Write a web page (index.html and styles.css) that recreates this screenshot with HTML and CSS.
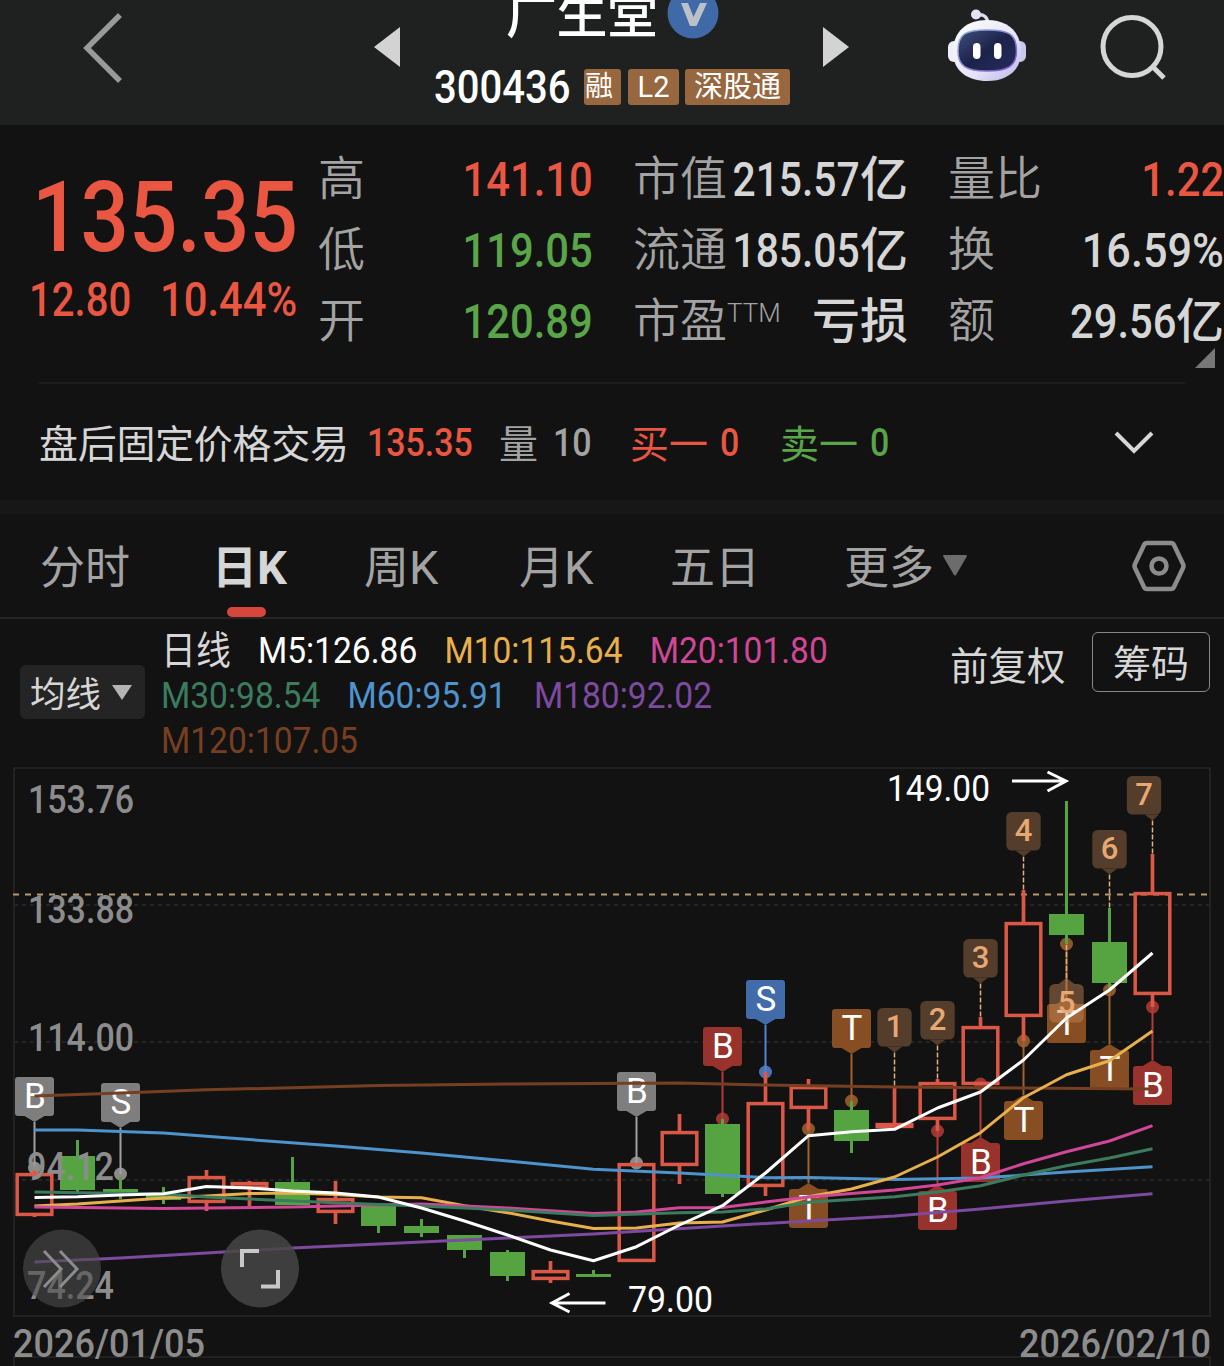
FILE: index.html
```
<!DOCTYPE html>
<html lang="zh-CN">
<head>
    <meta charset="UTF-8">
    <meta name="viewport" content="width=device-width, initial-scale=1.0">
    <title>广生堂 300436</title>
    <link rel="stylesheet" href="styles.css">
</head>
<body>
    <header class="header">
        <svg class="back" width="46" height="76" viewBox="0 0 46 76"><path d="M41 5 L8 38 L41 71" /></svg>
        <svg class="prev" width="26" height="40" viewBox="0 0 26 40"><path d="M0 20 L26 0 V40 Z" /></svg>
        <div class="stock">
            <div class="stock-name">
                <span>广生堂</span>
                <svg width="52" height="52" viewBox="0 0 52 52"><circle cx="26" cy="26" r="25.5" fill="#4069a8" /><path d="M14 16 H21 L26.500 30 L33 16 H40 L29.500 39 H23 Z" fill="#bcc0c8" /></svg>
            </div>
            <div class="stock-code">
                <span class="code"><b class="num">300436</b></span>
                <span class="tag tag-rong">融</span>
                <span class="tag tag-l2">L2</span>
                <span class="tag tag-sgt">深股通</span>
            </div>
        </div>
        <svg class="next" width="26" height="40" viewBox="0 0 26 40"><path d="M26 20 L0 0 V40 Z" /></svg>
        <svg class="robot" width="80" height="76" viewBox="0 0 80 76">
            <defs>
                <linearGradient id="shell" x1="0" y1="0" x2="1" y2="1">
                    <stop offset="0" stop-color="#ffffff" />
                    <stop offset="0.6" stop-color="#e6e3f8" />
                    <stop offset="1" stop-color="#b6b4ea" />
                </linearGradient>
                <linearGradient id="visor" x1="0" y1="0" x2="1" y2="1">
                    <stop offset="0" stop-color="#414d7d" />
                    <stop offset="0.5" stop-color="#1b2349" />
                    <stop offset="1" stop-color="#272b5c" />
                </linearGradient>
                <linearGradient id="rim" x1="0" y1="0" x2="1" y2="1">
                    <stop offset="0" stop-color="#8fb4dc" />
                    <stop offset="1" stop-color="#7d55c8" />
                </linearGradient>
            </defs>
            <path d="M30 9 Q40 7 41 18" fill="none" stroke="#dcdaf4" stroke-width="3.500" />
            <circle cx="29" cy="8.500" r="5" fill="#e4e2f7" />
            <rect x="1" y="35" width="12" height="21" rx="6" fill="#eeeefa" />
            <rect x="67" y="35" width="12" height="21" rx="6" fill="#c9c9ee" />
            <path d="M40 14 C60 14 74 25 74 46 C74 66 58 75 40 75 C22 75 6 66 6 46 C6 25 20 14 40 14 Z" fill="url(#shell)" />
            <path d="M40 24 C62 24 69.500 28 69.500 45 C69.500 60 61 65 40 65 C19 65 11 60 11 45 C11 28 18 24 40 24 Z" fill="url(#visor)" stroke="url(#rim)" stroke-width="1.500" />
            <rect x="26" y="37" width="7.5" height="16" rx="3.7" fill="#fff" />
            <rect x="47" y="37" width="7.5" height="16" rx="3.7" fill="#fff" />
        </svg>
        <svg class="search" width="70" height="70" viewBox="0 0 70 70"><ellipse cx="33" cy="32.500" rx="29" ry="29" /><path d="M53 52 L65 64" /></svg>
    </header>

    <section class="quote">
        <div class="price">
            <div class="price-last up"><span class="num">135.35</span></div>
            <div class="price-change up">
                <span class="num chg">12.80</span>
                <span class="num pct">10.44%</span>
            </div>
        </div>
        <div class="stats stats-a">
            <span class="label">高</span><span class="value up num">141.10</span>
            <span class="label">低</span><span class="value down num">119.05</span>
            <span class="label">开</span><span class="value down num">120.89</span>
        </div>
        <div class="stats stats-b">
            <span class="label">市值</span><span class="value"><span class="num">215.57</span>亿</span>
            <span class="label">流通</span><span class="value"><span class="num">185.05</span>亿</span>
            <span class="label">市盈<sup>TTM</sup></span><span class="value">亏损</span>
        </div>
        <div class="stats stats-c">
            <span class="label">量比</span><span class="value up num">1.22</span>
            <span class="label">换</span><span class="value num turnover">16.59%</span>
            <span class="label">额</span><span class="value"><span class="num">29.56</span>亿</span>
        </div>
        <div class="corner"></div>
    </section>

    <section class="after-hours">
        <span class="ah-title">盘后固定价格交易</span>
        <span class="num up">135.35</span>
        <span class="cn muted">量</span>
        <span class="num muted">10</span>
        <span class="cn up">买一</span>
        <span class="num up">0</span>
        <span class="cn down">卖一</span>
        <span class="num down">0</span>
        <svg width="40" height="26" viewBox="0 0 40 26"><path d="M2 3 L20 21 L38 3" /></svg>
    </section>

    <nav class="tabs">
        <span class="tab">分时</span>
        <span class="tab active">日<i>K</i></span>
        <span class="tab">周<i>K</i></span>
        <span class="tab">月<i>K</i></span>
        <span class="tab">五日</span>
        <span class="tab">更多</span>
        <svg class="more" width="24" height="21" viewBox="0 0 24 21"><path d="M1 0 H23 Q24.500 0 23.500 2 L13 20 Q12 21 11 20 L0.500 2 Q-0.500 0 1 0 Z" /></svg>
        <svg class="setting" width="54" height="52" viewBox="0 0 54 52"><path d="M15 3 H39 Q41 3 42 5 L51 24 Q52 26 51 28 L42 47 Q41 49 39 49 H15 Q13 49 12 47 L3 28 Q2 26 3 24 L12 5 Q13 3 15 3 Z" /><circle cx="27" cy="26" r="7.500" /></svg>
    </nav>

    <section class="ma">
        <div class="ma-btn"><span>均线</span><svg width="20" height="15" viewBox="0 0 20 15"><path d="M0 0 H20 L10 15 Z" fill="#b4b4b4" /></svg></div>
        <div class="ma-list">
            <div class="ma-row"><span class="ma-name">日线</span><span class="m5">M5:126.86</span><span class="m10">M10:115.64</span><span class="m20">M20:101.80</span></div>
            <div class="ma-row"><span class="m30">M30:98.54</span><span class="m60">M60:95.91</span><span class="m180">M180:92.02</span></div>
            <div class="ma-row"><span class="m120">M120:107.05</span></div>
        </div>
        <span class="fuquan">前复权</span>
        <span class="chouma">筹码</span>
    </section>

    <svg id="chart" class="chart" width="1224" height="606" viewBox="0 760 1224 606"></svg>

    <script>
        const chart = document.getElementById('chart');
        const x = i => 34.5 + i * 43;
        const RED = '#dc5846', GREEN = '#56a342';

        // [color, body top, body bottom, high, low]
        const candles = [
            ['r', 1173, 1216, 1168, 1217], ['g', 1156, 1190, 1140, 1192], ['g', 1189, 1192, 1177, 1199],
            ['g', 1195, 1200, 1187, 1204], ['r', 1176, 1203, 1170, 1211], ['r', 1182, 1189, 1181, 1206],
            ['g', 1182, 1205, 1157, 1205], ['r', 1198, 1213, 1181, 1224], ['g', 1206, 1226, 1206, 1233],
            ['g', 1226, 1233, 1219, 1237], ['g', 1235, 1250, 1235, 1258], ['g', 1252, 1276, 1250, 1281],
            ['r', 1270, 1280, 1261, 1283], ['g', 1274, 1277, 1270, 1277], ['r', 1163, 1262, 1163, 1262],
            ['r', 1131, 1166, 1114, 1184], ['g', 1124, 1194, 1119, 1197], ['r', 1102, 1187, 1072, 1196],
            ['r', 1086, 1109, 1079, 1130], ['g', 1110, 1141, 1101, 1153], ['r', 1123, 1128, 1088, 1128],
            ['r', 1082, 1120, 1079, 1131], ['r', 1026, 1085, 1017, 1085], ['r', 922, 1017, 890, 1041],
            ['g', 914, 935, 801, 944], ['g', 942, 983, 908, 990], ['r', 892, 995, 854, 1007]
        ];

        // [color, {index: y}]
        const lines = [
            ['#773f22', { 0: 1096, 2: 1093, 4: 1089.7, 6: 1087.8, 8: 1085.5, 11: 1084, 15: 1083, 17: 1085, 20: 1087, 23: 1088, 26: 1089 }],
            ['#7d4a9f', { 0: 1262, 2: 1258, 4: 1253, 6: 1248, 8: 1244, 11: 1238, 13: 1234, 16: 1226, 18: 1221, 20: 1216, 22: 1209, 24: 1201, 26: 1193.7 }],
            ['#4e93cb', { 0: 1130, 1: 1130, 3: 1133, 5: 1139.6, 7: 1146, 9: 1153, 11: 1161, 13: 1169.3, 15: 1173, 17: 1177.7, 18: 1177.6, 20: 1179.6, 22: 1178, 24: 1172, 26: 1166.7 }],
            ['#e8b04c', { 0: 1206, 1: 1204, 2: 1201, 3: 1198, 4: 1196, 5: 1193.5, 6: 1193, 7: 1194.5, 8: 1197, 9: 1197.7, 10: 1205.7, 11: 1212.7, 12: 1221, 13: 1228.5, 14: 1228, 15: 1223, 16: 1222, 17: 1210, 18: 1196.7, 19: 1189, 20: 1177, 21: 1157, 22: 1132.7, 23: 1097.7, 24: 1074.7, 25: 1060.7, 26: 1031 }],
            ['#cf4796', { 0: 1207, 3: 1208.5, 6: 1207, 8: 1205, 9: 1204, 11: 1208, 13: 1213.5, 14: 1212, 15: 1207.7, 16: 1207.5, 17: 1202, 18: 1197, 20: 1190, 21: 1185, 22: 1177.7, 23: 1163.7, 24: 1151.7, 25: 1141, 26: 1125.7 }],
            ['#3c7c5e', { 0: 1192, 3: 1194, 4: 1197, 6: 1201, 8: 1204.5, 9: 1206, 11: 1210, 13: 1215.5, 15: 1212.7, 16: 1212, 17: 1209, 18: 1202.3, 20: 1196.7, 21: 1192, 22: 1185.7, 23: 1175, 24: 1165.7, 25: 1158, 26: 1148.7 }],
            ['#ffffff', { 0: 1197.5, 1: 1196.8, 2: 1195, 3: 1193.7, 4: 1186.5, 5: 1188, 6: 1191, 7: 1193, 8: 1197, 9: 1208, 10: 1221, 11: 1235, 12: 1250, 13: 1260.7, 14: 1246.7, 15: 1225, 16: 1205.7, 17: 1173, 18: 1135.7, 19: 1131.7, 20: 1129.3, 21: 1108, 22: 1092, 23: 1060, 24: 1018, 25: 990, 26: 953 }]
        ];

        // [index, letter, color, box top, dot y]
        const trades = [
            [0, 'B', '#7e7e7e', 1077, 1168], [2, 'S', '#7e7e7e', 1083, 1174], [14, 'B', '#7e7e7e', 1072, 1163],
            [16, 'B', '#98322d', 1027, 1119], [17, 'S', '#426ba9', 980, 1072], [18, 'T', '#864e22', 1189, 1129],
            [19, 'T', '#864e22', 1009, 1101], [21, 'B', '#98322d', 1191, 1131], [22, 'B', '#98322d', 1143, 1084],
            [23, 'T', '#864e22', 1101, 1041], [24, 'T', '#864e22', 1004, 944], [25, 'T', '#864e22', 1050, 990],
            [26, 'B', '#98322d', 1066, 1007]
        ];

        // [index, number, box top, line end, box shift]
        const counts = [
            [20, '1', 1008, 1088, 0], [21, '2', 1001, 1079, 0], [22, '3', 939, 1017, 0], [23, '4', 812, 890, 0],
            [24, '5', 984, 944, 0], [25, '6', 830, 908, 0], [26, '7', 776, 854, -8.5]
        ];

        let s = '';
        s += '<path class="frame" d="M14 768 H1210 V1316 H14 Z M14 1366 V1357 H1210 V1366" />';
        [905, 1042, 1180].forEach(y => s += `<path class="grid" d="M14 ${y} H1210" />`);
        s += '<path class="last-line" d="M13 894.5 H1210" />';

        // pins sit behind the candle wicks
        trades.forEach(([i, t, c, top, dot]) => {
            const below = dot < top;
            const edge = below ? top : top + 39, tip = below ? top - 6 : top + 45;
            const pin = c === '#7e7e7e' ? '#a0a0a0' : c === '#98322d' ? '#b23c37' : c === '#426ba9' ? '#5684cc' : '#a0632f';
            s += `<circle cx="${x(i)}" cy="${dot}" r="6.5" fill="${pin}" opacity="0.85" />`;
            s += `<path d="M${x(i)} ${tip} V${dot}" stroke="${pin}" stroke-width="2" />`;
            s += `<rect x="${x(i) - 19.5}" y="${top}" width="39" height="39" rx="3" fill="${c}" />`;
            s += `<path d="M${x(i) - 10} ${edge} H${x(i) + 10} L${x(i)} ${tip} Z" fill="${c}" />`;
            s += `<text class="pin-text" x="${x(i) + 0.5}" y="${top + 31}">${t}</text>`;
        });

        candles.forEach(([c, top, bottom, high, low], i) => {
            if (c === 'g') {
                s += `<rect x="${x(i) - 17.5}" y="${top}" width="35" height="${bottom - top}" fill="${GREEN}" />`;
                s += `<path d="M${x(i)} ${high} V${low}" stroke="${GREEN}" stroke-width="3" />`;
            } else {
                s += `<rect x="${x(i) - 17.3}" y="${top + 1.6}" width="34.6" height="${bottom - top - 3.2}" fill="none" stroke="${RED}" stroke-width="3.5" />`;
                s += `<path d="M${x(i)} ${high} V${top} M${x(i)} ${bottom} V${low}" stroke="${RED}" stroke-width="3.7" />`;
            }
        });

        counts.forEach(([i, n, top, end, shift]) => {
            const below = end < top;
            const cx = x(i) + shift, edge = below ? top : top + 38.5, tip = below ? top - 6 : top + 44.5;
            s += `<path class="count-line" d="M${x(i)} ${tip} V${end}" />`;
            s += `<g class="count-box${below ? ' count-over' : ''}"><rect x="${cx - 17.2}" y="${top}" width="34.4" height="38.5" rx="5.5" /><path d="M${x(i) - 8} ${edge} H${Math.min(x(i) + 8, cx + 15)} L${x(i)} ${tip} Z" /></g>`;
            s += `<text class="count-text" x="${cx}" y="${top + 29}">${n}</text>`;
        });

        lines.forEach(([c, pts]) => {
            const p = Object.keys(pts).map(i => x(+i) + ',' + pts[i]).join(' ');
            s += `<polyline points="${p}" fill="none" stroke="${c}" stroke-width="3" stroke-linejoin="round" />`;
        });

        // [text, x, baseline, width, class]
        [
            ['153.76', 28, 813, 106, 'axis'], ['133.88', 28, 922.5, 106, 'axis'], ['114.00', 28, 1050.5, 106, 'axis'],
            ['94.12', 27, 1179.5, 87, 'axis'], ['74.24', 27, 1299, 87, 'axis'],
            ['2026/01/05', 13, 1357, 192, 'axis'], ['2026/02/10', 1019, 1357, 192, 'axis'],
            ['149.00', 887, 801, 103, 'extreme'], ['79.00', 628, 1312, 85, 'extreme']
        ].forEach(([t, tx, ty, w, k]) => {
            s += `<text class="${k}" x="${tx}" y="${ty}" textLength="${w}" lengthAdjust="spacingAndGlyphs">${t}</text>`;
        });

        s += '<path class="arrow" d="M1012 781 H1066 M1047.500 772 L1066 781 L1047.500 791" />';
        s += '<path class="arrow" d="M605.500 1303 H552 M569.500 1293.500 L552 1303 L569.500 1312" />';
        s += '<circle cx="62" cy="1268.500" r="39" fill="#4c4c4c" opacity="0.6" />';
        s += '<path class="tool faded" d="M44 1251 L61 1269 L44 1287 M60 1251 L77 1269 L60 1287" />';
        s += '<circle cx="260" cy="1268.500" r="39" fill="#474747" opacity="0.85" />';
        s += '<path class="tool" d="M242 1267 V1251 H259 M278 1270 V1286.500 H261" />';
        chart.innerHTML = s;
    </script>
</body>
</html>
```
FILE: styles.css
```
* {
    box-sizing: border-box;
}
body {
    margin: 0;
    width: 1224px;
    height: 1366px;
    overflow: hidden;
    background-color: #121212;
    color: #d6d6d6;
    font-family: Roboto, "Noto Sans CJK SC", sans-serif;
}
svg {
    display: block;
    flex-shrink: 0;
}
.num {
    display: inline-block;
    font-weight: 500;
    transform: scaleX(0.87);
    transform-origin: left;
}
.up {
    color: #e95742;
}
.down {
    color: #5aa548;
}
.muted {
    color: #a3a3a3;
}

/* header */
.header {
    display: flex;
    height: 125px;
    background-color: #1f2120;
    overflow: hidden;
}
.back {
    margin: 10px 0 0 79px;
    fill: none;
    stroke: #999;
    stroke-width: 5.5;
}
.prev, .next {
    margin-top: 27px;
    fill: #d3d3d3;
}
.prev {
    margin-left: 249px;
}
.stock {
    width: 360px;
    margin: -12px 0 0 34px;
}
.stock-name {
    display: flex;
    height: 70px;
    padding-left: 72px;
    color: #fff;
    font-size: 51px;
    font-weight: 500;
    line-height: 55px;
}
.stock-name svg {
    margin: -1px 0 0 9px;
}
.stock-name span {
    letter-spacing: -0.5px;
}
.stock-code {
    display: flex;
    align-items: center;
    height: 58px;
}
.code {
    width: 150px;
    color: #fff;
    font-size: 46px;
}
.tag {
    height: 36px;
    border-radius: 3px;
    background-color: #97683f;
    color: #fff;
    font-size: 29px;
    line-height: 36px;
    text-align: center;
    white-space: nowrap;
}
.tag-rong {
    width: 37px;
    margin-right: 7px;
    padding-left: 1px;
    font-size: 28px;
    text-align: left;
}
.tag-l2 {
    width: 51px;
    margin-right: 6px;
}
.tag-sgt {
    width: 105px;
}
.next {
    margin-left: 29px;
}
.robot {
    margin: 6px 0 0 98px;
}
.search {
    margin: 14px 0 0 72px;
    fill: none;
    stroke: #d6d6d6;
    stroke-width: 5;
}

/* quote */
.quote {
    position: relative;
    display: flex;
    height: 257px;
    padding-top: 19px;
}
.price {
    width: 318px;
    white-space: nowrap;
}
.price-last {
    height: 118px;
    padding: 15px 0 0 32px;
    font-size: 98px;
    line-height: 118px;
}
.price-change {
    display: flex;
    padding: 8px 0 0 29px;
    font-size: 48px;
    line-height: 60px;
}
.price-change .chg {
    width: 132px;
    transform: scaleX(0.835);
}
.stats {
    display: grid;
    grid-template-columns: 0 1fr;
    grid-auto-rows: 71px;
    height: 213px;
    font-size: 48px;
    line-height: 71px;
    white-space: nowrap;
}
.stats-a {
    width: 275px;
}
.stats-b {
    width: 275px;
    margin-left: 40px;
}
.stats-c {
    width: 276px;
    margin-left: 40px;
}
.label {
    margin-top: -1px;
    color: #a3a3a3;
    font-weight: 350;
    font-size: 47px;
}
.label sup {
    font-size: 26px;
    font-weight: 300;
    line-height: 0;
    vertical-align: 15px;
}
.value {
    justify-self: end;
    font-weight: 500;
}
.value.num, .value .num {
    transform-origin: right;
}
.stats-b .value .num {
    transform: scaleX(0.85);
}
.value.turnover {
    transform: scaleX(0.9);
}
.corner {
    position: absolute;
    right: 9px;
    bottom: 14px;
    border-left: 20px solid transparent;
    border-bottom: 20px solid #777;
}

/* fixed price trading after the close */
.after-hours {
    display: grid;
    grid-template-columns: 328px 132px 54px 77px 90px 60px 90px 244px 40px;
    align-items: center;
    height: 118px;
    margin: 0 39px;
    padding-top: 2px;
    border-top: 2px solid #1d1d1d;
    font-size: 39px;
    white-space: nowrap;
}
.ah-title {
    letter-spacing: -0.3px;
}
.ah-title, .after-hours .cn {
    margin-top: -4px;
}
.after-hours svg {
    fill: none;
    stroke: #d6d6d6;
    stroke-width: 4;
}

/* period tabs */
.tabs {
    display: flex;
    align-items: center;
    height: 119px;
    padding-left: 40px;
    border-top: 14px solid #171717;
    border-bottom: 2px solid #252525;
    color: #a3a3a3;
    font-size: 45px;
}
.tab {
    position: relative;
    width: 155px;
    margin-top: -2px;
    white-space: nowrap;
}
.tab i {
    font-style: normal;
    font-size: 47px;
}
.tab:nth-child(1) {
    width: 172px;
}
.tab:nth-child(2) {
    width: 152px;
}
.tab:nth-child(4) {
    width: 151px;
}
.tab:nth-child(5) {
    width: 174px;
}
.tab:nth-child(6) {
    width: 99px;
}
.tab.active {
    color: #d6d6d6;
    font-weight: 700;
}
.tab.active::after {
    content: "";
    position: absolute;
    left: 15px;
    bottom: -20px;
    width: 39px;
    height: 10px;
    border-radius: 5px;
    background-color: #d6463c;
}
.more {
    fill: #6c6c6c;
}
.setting {
    margin-left: 165px;
    fill: none;
    stroke: #8c8c8c;
    stroke-width: 4.5;
}

/* moving averages */
.ma {
    display: flex;
    height: 141px;
    font-size: 37px;
    white-space: nowrap;
}
.ma-btn {
    display: flex;
    align-items: center;
    gap: 11px;
    width: 125px;
    height: 54px;
    margin: 46px 0 0 20px;
    padding-left: 10px;
    border-radius: 6px;
    background-color: #242424;
    font-size: 35.5px;
}
.ma-btn span {
    margin-top: -2px;
}
.ma-list {
    width: 805px;
    padding-top: 9px;
    margin-left: 16px;
    font-weight: 450;
}
.ma-row {
    display: flex;
    gap: 30px;
    height: 45px;
    line-height: 45px;
    transform: scaleX(0.906);
    transform-origin: left;
}
.ma-name {
    font-size: 38.5px;
    font-weight: 400;
}
.m5 { color: #fff; }
.m10 { color: #e8b04c; }
.m20 { color: #cf4796; }
.m30 { color: #3c7c5e; }
.m60 { color: #4e93cb; }
.m180 { color: #7d4a9f; }
.m120 { color: #773f22; }
.fuquan {
    width: 142px;
    margin-left: -16px;
    font-size: 38.5px;
    line-height: 95px;
}
.chouma {
    width: 118px;
    height: 60px;
    margin-top: 13px;
    border: 1.5px solid #888;
    border-radius: 6px;
    font-size: 38px;
    line-height: 62px;
    text-align: center;
}

/* k-line chart */
.chart {
    font-family: Roboto, sans-serif;
}
.frame {
    fill: none;
    stroke: #272727;
    stroke-width: 1.5;
}
.grid {
    stroke: #2b2b2b;
    stroke-width: 1.5;
    stroke-dasharray: 4 4;
}
.last-line {
    stroke: #b39a6b;
    stroke-width: 2;
    stroke-dasharray: 6 6;
}
.axis {
    fill: #8c8c8c;
    font-size: 38px;
    font-weight: 500;
}
.extreme {
    fill: #fff;
    font-size: 36px;
}
.pin-text {
    fill: #fff;
    font-size: 35px;
    text-anchor: middle;
}
.count-box {
    fill: #543d2b;
}
.count-over {
    fill: #c98958;
    opacity: 0.45;
}
.count-text {
    fill: #e8a873;
    font-size: 31px;
    font-weight: 500;
    text-anchor: middle;
}
.count-line {
    stroke: #e0b084;
    stroke-width: 1.5;
    stroke-dasharray: 5 2;
}
.arrow {
    fill: none;
    stroke: #fff;
    stroke-width: 3;
}
.tool {
    fill: none;
    stroke: #c8c8c8;
    stroke-width: 4;
}
.faded {
    stroke: #8c8c8c;
    stroke-width: 3;
}
```
